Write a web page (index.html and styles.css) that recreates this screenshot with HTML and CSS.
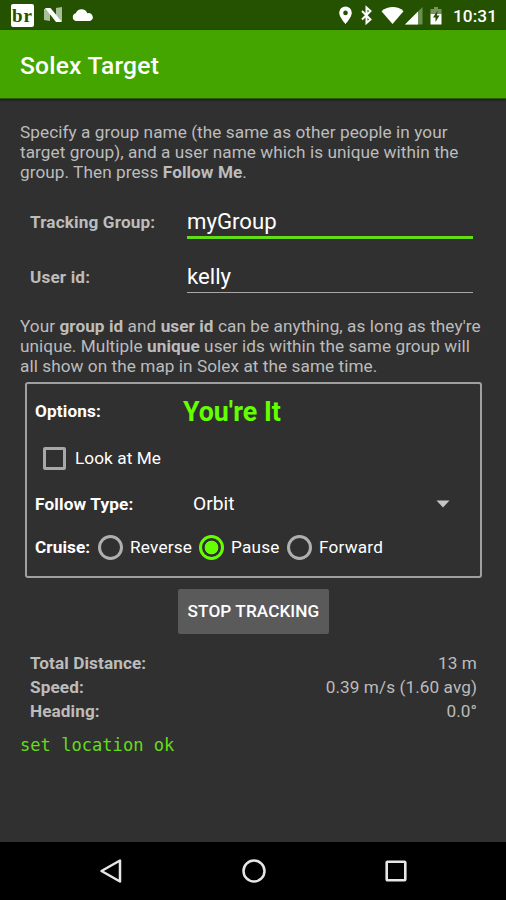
FILE: index.html
```html
<!DOCTYPE html>
<html lang="en">
<head>
<meta charset="utf-8">
<title>Solex Target</title>
<link rel="stylesheet" href="styles.css">
</head>
<body>
<div class="status">
  <span class="br-icon">br</span>
  <svg class="n-icon" width="20" height="16" viewBox="0 0 20 16"><path fill="#a9bf9c" d="M1 2l6-1v13l-6-1zM13 1l6-1v14l-6 1z"/><path fill="#fff" d="M2 1h5.500L19 15h-6z"/></svg>
  <svg class="cloud-icon" width="22" height="13" viewBox="0 0 22 13"><path fill="#fff" d="M4 12a4 4 0 0 1-.2-7.800A6.200 6.200 0 0 1 15.300 4.300 3.900 3.900 0 0 1 18 12z"/></svg>
  <svg class="system" width="106" height="20" viewBox="0 0 106 20">
    <path fill="#fff" fill-rule="evenodd" d="M7.500 1.500A6.300 6.300 0 0 0 1.200 7.800C1.200 12.500 7.500 19 7.500 19s6.300-6.500 6.300-11.200A6.300 6.300 0 0 0 7.500 1.500zm0 4.100a2.300 2.300 0 1 1 0 4.600 2.300 2.300 0 0 1 0-4.600z"/>
    <path fill="none" stroke="#fff" stroke-width="2" d="M24 6l8.500 8.500-4 3.500V2.500l4 3.500-8.500 8.500"/>
    <path fill="#fff" d="M43.500 6.300C50 .7 60 .7 65.500 6.300L54.500 19z"/>
    <path fill="#6b8e55" d="M67 19.500L84.500 2v17.500z"/><path fill="#fff" d="M67 19.500L80 6.500v13z"/>
    <path fill="#77945f" d="M96 2h4v2h3.500v5h-11V4H96z"/><path fill="#fff" d="M92.500 9h11v10.500h-11z"/><path fill="#245200" d="M99.500 5.500l-4.500 7h2.500v4.500l4-6.500h-2.500z"/>
  </svg>
  <span class="clock">10:31</span>
</div>
<header class="appbar">Solex Target</header>
<main class="content">
  <p class="note">Specify a group name (the same as other people in your<br>target group), and a user name which is unique within the<br>group. Then press <b>Follow Me</b>.</p>
  <div class="field first"><label class="field-label">Tracking Group:</label><div class="input focused">myGroup</div></div>
  <div class="field"><label class="field-label">User id:</label><div class="input">kelly</div></div>
  <p class="note hint">Your <b>group id</b> and <b>user id</b> can be anything, as long as they're<br>unique. Multiple <b>unique</b> user ids within the same group will<br>all show on the map in Solex at the same time.</p>
  <section class="options">
    <div class="row heading"><b class="label">Options:</b><span class="it">You're It</span></div>
    <div class="row look"><span class="checkbox"></span><span>Look at Me</span></div>
    <div class="row follow"><b class="label">Follow Type:</b><span class="select">Orbit</span><svg width="14" height="8" viewBox="0 0 14 8"><path fill="#c5c5c5" d="M.5.500h13L7 7.500z"/></svg></div>
    <div class="row cruise"><b class="cruise-label">Cruise:</b><span class="radio"></span><span class="choice">Reverse</span><span class="radio on"></span><span class="choice pause">Pause</span><span class="radio"></span><span class="choice">Forward</span></div>
  </section>
  <button class="stop">STOP TRACKING</button>
  <dl class="stats">
    <div class="stat"><dt>Total Distance:</dt><dd>13 m</dd></div>
    <div class="stat"><dt>Speed:</dt><dd>0.39 m/s (1.60 avg)</dd></div>
    <div class="stat"><dt>Heading:</dt><dd>0.0°</dd></div>
  </dl>
  <p class="log">set location ok</p>
</main>
<nav class="nav">
  <svg width="24" height="26" viewBox="0 0 24 26"><path fill="none" stroke="#e6e6e6" stroke-width="2.500" stroke-linejoin="round" d="M21 2.500v21L2.500 13z"/></svg>
  <svg width="26" height="26" viewBox="0 0 26 26"><circle cx="13" cy="13" r="10.500" fill="none" stroke="#e6e6e6" stroke-width="2.500"/></svg>
  <svg width="24" height="24" viewBox="0 0 24 24"><rect x="2.700" y="2.700" width="18.600" height="18.600" rx=".8" fill="none" stroke="#e6e6e6" stroke-width="2.600"/></svg>
</nav>
</body>
</html>
```
FILE: styles.css
```css
* { box-sizing: border-box; }
body { margin: 0; width: 506px; height: 900px; display: flex; flex-direction: column; overflow: hidden; background: #303030; color: #fff; font: 17.2px/20px Roboto, sans-serif; letter-spacing: .08px; }
b { font-weight: 700; }
svg { display: block; flex: none; }
.status { height: 30px; flex: none; display: flex; align-items: center; background: #245200; padding-left: 11px; }
.br-icon { width: 23px; height: 23px; border-radius: 2px; background: #fff; color: #245200; font: bold 19px/24px "Liberation Serif", serif; letter-spacing: 1px; text-align: center; }
.n-icon { margin-left: 9px; }
.cloud-icon { margin-left: 9px; }
.system { margin-left: 244px; }
.clock { margin-left: 9px; font-weight: 500; line-height: 32px; padding-top: 1px; letter-spacing: .1px; }
.appbar { height: 69px; flex: none; padding: 1px 20px 0; background: #44a500; border-bottom: 1px solid #266000; box-shadow: 0 1px 2px #181818; font-size: 24.6px; font-weight: 500; line-height: 69px; letter-spacing: .2px; }
.content { flex: 1; padding: 23px 24px 0 20px; }
.note { margin: 0; color: #bcbcbc; letter-spacing: .06px; white-space: nowrap; }
.field { display: flex; align-items: flex-start; height: 55px; padding: 0 9px 0 10px; }
.field.first { margin-top: 12px; }
.field-label { width: 157px; font-weight: 700; line-height: 56px; letter-spacing: .13px; color: #bcbcbc; }
.input { flex: 1; height: 44px; font-size: 22.2px; line-height: 54px; letter-spacing: 0; border-bottom: 1.500px solid #a8a8a8; }
.input.focused { height: 45px; border-bottom: 3px solid #64dd17; }
.hint { margin-top: 12px; }
.options { width: 457px; height: 196px; margin: 6px 0 0 5px; border: 2px solid #a0a0a0; border-radius: 3px; padding: 4px 0 0 8px; }
.row { display: flex; align-items: center; }
.heading { height: 46px; }
.label { width: 148px; letter-spacing: .15px; }
.it { color: #64ff00; font-size: 26.8px; font-weight: 700; line-height: 32px; padding-top: 2px; letter-spacing: 0; }
.look { height: 48px; padding-left: 8px; gap: 9px; }
.checkbox { width: 23px; height: 23px; border: 3px solid #a8a8a8; border-radius: 2px; }
.follow { height: 43px; }
.select { width: 253px; padding: 1px 0 0 10px; font-size: 19.2px; line-height: 22px; letter-spacing: 0; }
.cruise { height: 44px; }
.cruise-label { width: 63px; }
.radio { width: 25px; height: 25px; border: 3px solid #b0b0b0; border-radius: 50%; margin-right: 7px; flex: none; }
.radio.on { border-color: #64ff00; background: radial-gradient(circle, #64ff00 0 6.500px, transparent 7.200px); }
.choice { width: 69px; letter-spacing: .2px; }
.choice.pause { width: 56px; }
.stop { display: block; width: 151px; height: 45px; margin: 11px 0 0 158px; padding: 0; border: 0; border-radius: 2px; background: #5a5a5b; color: #fff; font: 500 17.2px/45px Roboto, sans-serif; letter-spacing: .08px; white-space: nowrap; }
.stats { margin: 17px 5px 0 10px; color: #bcbcbc; }
.stat { display: flex; justify-content: space-between; height: 24px; line-height: 24px; }
dt { font-weight: 700; }
dd { margin: 0; }
.log { margin: 12px 0 0; color: #64dd17; font: 17.1px/20px "DejaVu Sans Mono", monospace; letter-spacing: 0; }
.nav { height: 58px; flex: none; display: flex; align-items: center; justify-content: space-between; background: #000; padding: 0 98px 0 99px; }
```
